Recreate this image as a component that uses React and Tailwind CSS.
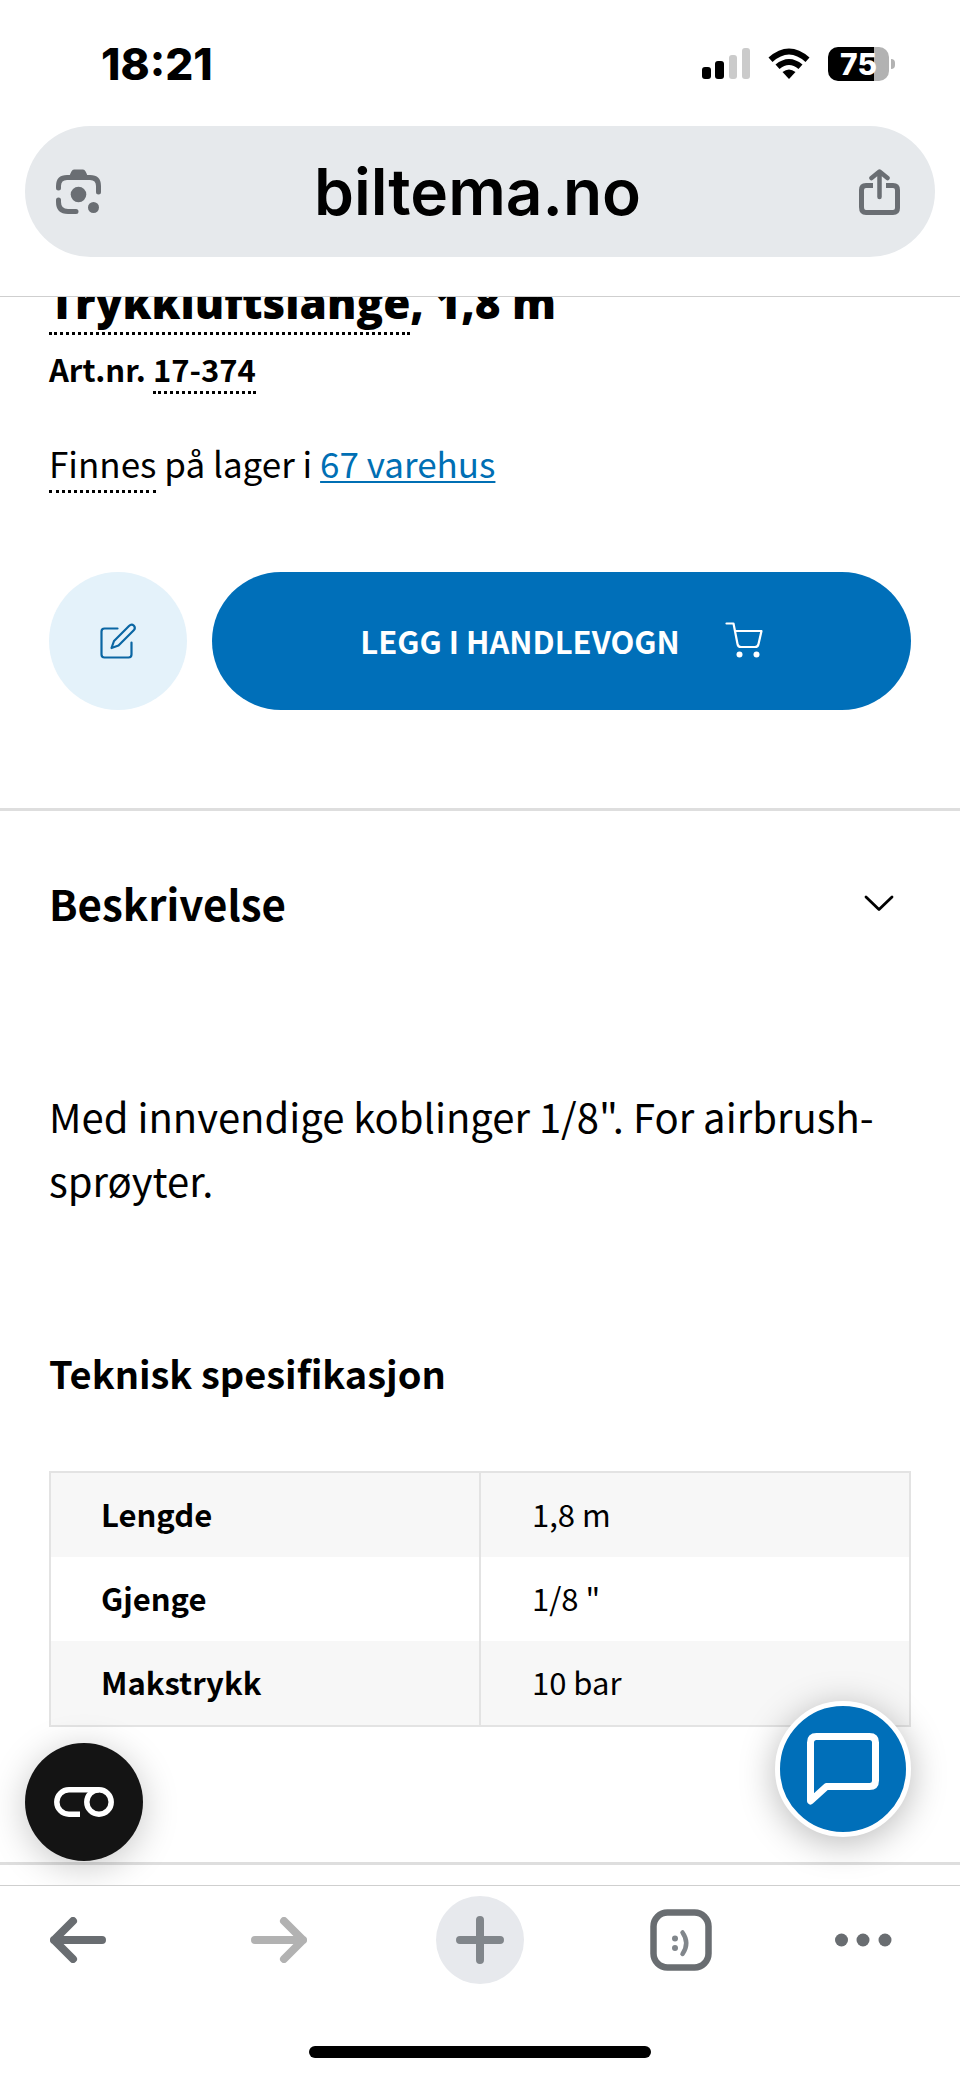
const BODY = "font-['Noto_Sans_CJK_SC','Noto_Sans',sans-serif]";
const SYSTEM = "font-['Inter',sans-serif]";

const specs = [
  ["Lengde", "1,8 m"],
  ["Gjenge", "1/8 \""],
  ["Makstrykk", "10 bar"],
];

function StatusBar() {
  return (
    <div className="flex h-[126px] items-center justify-between pt-0.5 pr-[65px] pl-[101px]">
      <time className="text-[44px] leading-none font-extrabold">18:21</time>
      <div className="flex items-center gap-[18px]">
        <svg width="48" height="32" viewBox="0 0 48 32" aria-label="Signal">
          <rect x="0" y="19" width="9" height="12" rx="3" />
          <rect x="13" y="13" width="9" height="18" rx="3" />
          <rect x="27" y="7" width="8" height="24" rx="3" fill="#cbcbcb" />
          <rect x="40" y="0" width="8" height="31" rx="3" fill="#cbcbcb" />
        </svg>
        <svg width="42" height="32" viewBox="0 0 42 32" aria-label="Wi-Fi">
          <path d="M0.500 9.500Q21 -8.500 41.500 9.500L37.500 14Q21 -1 4.500 14Z" />
          <path d="M7.500 16.500Q21 5.500 34.500 16.500L30.500 21Q21 13 11.500 21Z" />
          <path d="M14.500 24Q21 19 27.500 24L21 31Z" />
        </svg>
        <div className="flex items-center gap-0.5">
          <div className="flex h-[34px] w-[61px] items-center justify-center rounded-[10px] bg-linear-to-r from-black from-75% to-[#b2b2b2] to-75%">
            <span className="text-[30px] leading-none font-extrabold text-white">75</span>
          </div>
          <div className="h-[10px] w-1 rounded-r-full bg-[#b2b2b2]" />
        </div>
      </div>
    </div>
  );
}

function AddressBar() {
  return (
    <div className="mx-[25px] flex h-[131px] items-center justify-between rounded-full bg-[#e6e9ec] px-[31px] text-[#6a6e73]">
      <button type="button" aria-label="Bildesøk">
        <svg width="45" height="46" viewBox="0 0 45 46" fill="none" stroke="currentColor" strokeWidth="5" strokeLinecap="round">
          <path d="M2.500 19V17Q2.500 8.500 11 8.500H34Q42.500 8.500 42.500 17V23" />
          <path d="M2.500 31V33Q2.500 42.500 12 42.500H20" />
          <path d="M13 9Q15 0.500 18 0.500H27Q30 0.500 32 9Z" fill="currentColor" stroke="none" />
          <circle cx="22.500" cy="25.500" r="7.800" fill="currentColor" stroke="none" />
          <circle cx="37.500" cy="38.500" r="5.500" fill="currentColor" stroke="none" />
        </svg>
      </button>
      <span className="text-[64px] leading-none font-semibold text-black">biltema.no</span>
      <button type="button" aria-label="Del">
        <svg width="50" height="46" viewBox="0 0 50 46" fill="none" stroke="currentColor" strokeWidth="5" strokeLinecap="round" strokeLinejoin="round">
          <path strokeLinecap="butt" d="M19 16.500H12Q7.500 16.500 7.500 21V38Q7.500 43.500 12 43.500H39Q43.500 43.500 43.500 39V21Q43.500 16.500 39 16.500H32" />
          <path d="M25.500 28V3M17.500 9L25.500 2.500L33.500 9" strokeWidth="4.500" />
        </svg>
      </button>
    </div>
  );
}

function Product() {
  return (
    <section className="px-[49px]">
      <h1 className="-mt-5 font-['Open_Sans',sans-serif] text-[44px] leading-[50px] font-extrabold">
        <span className="border-b-[3px] border-dotted border-black">Trykkluftslange</span>, 1,8 m
      </h1>
      <p className="mt-[21px] text-[31px] leading-[42px] font-bold">
        Art.nr. <span className="border-b-[3px] border-dotted border-black">17-374</span>
      </p>
      <p className="mt-[47px] text-[35px] leading-[52px]">
        <span className="border-b-[3px] border-dotted border-black pb-0.5">Finnes</span> på lager i{" "}
        <a href="#varehus" className="text-[#006fb4] underline decoration-2 underline-offset-[3px]">67 varehus</a>
      </p>
      <div className="mt-[83px] flex gap-[25px]">
        <button type="button" aria-label="Rediger" className="flex size-[138px] shrink-0 items-center justify-center rounded-full bg-[#e4f2fa] text-[#0a66a3]">
          <svg width="36" height="36" viewBox="0 0 36 36" fill="none" stroke="currentColor" strokeWidth="2.200" strokeLinecap="round" strokeLinejoin="round">
            <path d="M17.500 5.500H4.500Q1.500 5.500 1.500 8.500V31.500Q1.500 34.500 4.500 34.500H28.500Q31.500 34.500 31.500 31.500V19.500" />
            <path d="M11.500 25L14 18L29 3Q31.500 0.500 33.700 2.500Q36 5 33.500 7.500L18.500 22.500Z" />
          </svg>
        </button>
        <button type="button" className="flex h-[138px] grow items-center justify-center gap-[45px] rounded-full bg-[#006fb9] pb-0.5 text-[31px] leading-none font-bold text-white">
          LEGG I HANDLEVOGN
          <svg width="38" height="36" viewBox="0 0 38 36" fill="none" stroke="currentColor" strokeWidth="2.200" strokeLinecap="round" strokeLinejoin="round">
            <path d="M1.500 1.500H8.500L12.500 22Q13 25 16 25H30Q33 25 33.500 22L36.500 9H10" />
            <circle cx="14.500" cy="32.500" r="3" fill="currentColor" stroke="none" />
            <circle cx="31.500" cy="32.500" r="3" fill="currentColor" stroke="none" />
          </svg>
        </button>
      </div>
    </section>
  );
}

function Description() {
  return (
    <section className="mt-[98px] border-y-[3px] border-[#dedede] px-[49px] pt-[60px] pb-[135px]">
      <h2 className="text-[42px] leading-[64px] font-bold">
        <button type="button" aria-expanded="true" className="flex w-full items-center justify-between pr-[17px]">
          Beskrivelse
          <svg width="30" height="18" viewBox="0 0 30 18" fill="none" stroke="currentColor" strokeWidth="2.800" strokeLinecap="round" strokeLinejoin="round">
            <path d="M2 3L15 15.500L28 3" />
          </svg>
        </button>
      </h2>
      <p className="mt-[149px] text-[40px] leading-[64px]">
        Med innvendige koblinger 1/8". For airbrush-sprøyter.
      </p>
      <h3 className="mt-[129px] text-[38px] leading-[64px] font-bold">Teknisk spesifikasjon</h3>
      <table className="mt-[66px] w-full table-fixed border-collapse border-2 border-[#e3e3e3] text-[31px] leading-[44px]">
        <tbody>
          {specs.map(([name, value]) => (
            <tr key={name} className="odd:bg-[#f7f7f7]">
              <th scope="row" className="border-r-2 border-[#e3e3e3] pt-[19px] pb-[21px] pl-[50px] text-left font-bold">{name}</th>
              <td className="pt-[19px] pb-[21px] pl-[51px]">{value}</td>
            </tr>
          ))}
        </tbody>
      </table>
    </section>
  );
}

function FloatingButtons() {
  return (
    <>
      <button type="button" aria-label="Informasjonskapsler" className="absolute bottom-6 left-[25px] flex size-[118px] items-center justify-center rounded-full bg-[#141414] text-white shadow-[0_6px_36px_rgba(0,0,0,0.22)]">
        <svg width="60" height="30" viewBox="0 0 60 30" fill="none" stroke="currentColor" strokeWidth="5.500">
          <circle cx="45" cy="15" r="12.200" />
          <path d="M45 2.800H15A12.200 12.200 0 0 0 15 27.200H26" />
        </svg>
      </button>
      <button type="button" aria-label="Chat" className="absolute right-[49px] bottom-12 flex size-[136px] items-center justify-center rounded-full border-[5px] border-white bg-[#006fb9] text-white shadow-[0_6px_36px_rgba(0,0,0,0.28)]">
        <svg width="72" height="72" viewBox="0 0 72 72" fill="none" stroke="currentColor" strokeWidth="7" strokeLinejoin="round">
          <path d="M3.500 68V9.500Q3.500 3.500 9.500 3.500H62.500Q68.500 3.500 68.500 9.500V47.500Q68.500 53.500 62.500 53.500H19.500Z" />
        </svg>
      </button>
    </>
  );
}

function BottomBar() {
  return (
    <nav className="border-t border-[#cfcfcf]">
      <div className="flex items-center justify-between px-[22px] pt-[10px] text-[#696d71] *:flex *:w-28 *:items-center">
        <button type="button" aria-label="Tilbake" className="justify-center">
          <svg width="56" height="46" viewBox="0 0 56 46" fill="none" stroke="currentColor" strokeWidth="8" strokeLinecap="round" strokeLinejoin="round">
            <path d="M52 23H4M23 4L4 23L23 42" />
          </svg>
        </button>
        <button type="button" aria-label="Frem" className="justify-center text-[#b2b2b2]">
          <svg width="56" height="46" viewBox="0 0 56 46" fill="none" stroke="currentColor" strokeWidth="8" strokeLinecap="round" strokeLinejoin="round">
            <path d="M4 23H52M33 4L52 23L33 42" />
          </svg>
        </button>
        <button type="button" aria-label="Ny fane" className="justify-center text-[#81868b]">
          <span className="flex size-[88px] items-center justify-center rounded-full bg-[#e7e9ed]">
            <svg width="48" height="48" viewBox="0 0 48 48" fill="none" stroke="currentColor" strokeWidth="8" strokeLinecap="round">
              <path d="M4 24H44M24 4V44" />
            </svg>
          </span>
        </button>
        <button type="button" aria-label="Faner" className="justify-center">
          <svg width="62" height="62" viewBox="0 0 62 62" fill="none">
            <rect x="3.500" y="3.500" width="55" height="55" rx="14" stroke="currentColor" strokeWidth="6.500" />
            <circle cx="25" cy="29.500" r="3" fill="#81868b" />
            <circle cx="25" cy="39" r="3" fill="#81868b" />
            <path d="M32.500 23.500Q40 34 32.500 45" stroke="#81868b" strokeWidth="4.500" strokeLinecap="round" />
          </svg>
        </button>
        <button type="button" aria-label="Mer" className="justify-start pl-2">
          <svg width="58" height="14" viewBox="0 0 58 14" fill="currentColor">
            <circle cx="7.500" cy="7" r="6.500" />
            <circle cx="29" cy="7" r="6.500" />
            <circle cx="51" cy="7" r="6.500" />
          </svg>
        </button>
      </div>
      <div className="mx-auto mt-[62px] mb-5 h-3 w-[342px] rounded-full bg-black" />
    </nav>
  );
}

export default function App() {
  return (
    <div className={`flex min-h-screen flex-col bg-white text-black ${SYSTEM}`}>
      <header className="border-b border-[#cfcfcf] pb-[39px]">
        <StatusBar />
        <AddressBar />
      </header>
      <main className={`relative grow overflow-hidden pb-5 ${BODY}`}>
        <Product />
        <Description />
        <FloatingButtons />
      </main>
      <BottomBar />
    </div>
  );
}
